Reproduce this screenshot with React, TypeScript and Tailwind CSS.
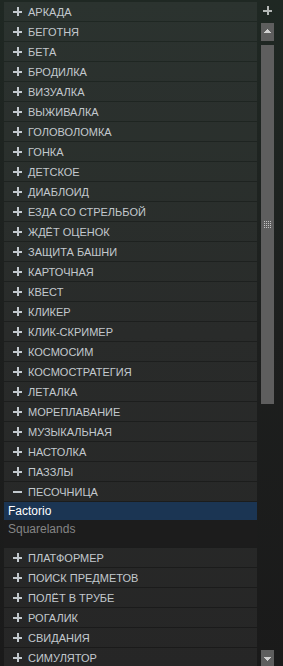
import React from "react";

// Жанры в боковой панели библиотеки
const BEFORE = [
  "АРКАДА",
  "БЕГОТНЯ",
  "БЕТА",
  "БРОДИЛКА",
  "ВИЗУАЛКА",
  "ВЫЖИВАЛКА",
  "ГОЛОВОЛОМКА",
  "ГОНКА",
  "ДЕТСКОЕ",
  "ДИАБЛОИД",
  "ЕЗДА СО СТРЕЛЬБОЙ",
  "ЖДЁТ ОЦЕНОК",
  "ЗАЩИТА БАШНИ",
  "КАРТОЧНАЯ",
  "КВЕСТ",
  "КЛИКЕР",
  "КЛИК-СКРИМЕР",
  "КОСМОСИМ",
  "КОСМОСТРАТЕГИЯ",
  "ЛЕТАЛКА",
  "МОРЕПЛАВАНИЕ",
  "МУЗЫКАЛЬНАЯ",
  "НАСТОЛКА",
  "ПАЗЗЛЫ",
];

const AFTER = [
  "ПЛАТФОРМЕР",
  "ПОИСК ПРЕДМЕТОВ",
  "ПОЛЁТ В ТРУБЕ",
  "РОГАЛИК",
  "СВИДАНИЯ",
  "СИМУЛЯТОР",
];

const GAMES = [
  { name: "Factorio", selected: true },
  { name: "Squarelands", selected: false },
];

function Plus({ color = "bg-[#c3c9ce]" }: { color?: string }) {
  return (
    <span className="relative block w-[9px] h-[9px] shrink-0">
      <span className={`absolute left-0 top-[3.5px] w-[9px] h-[2px] ${color}`} />
      <span className={`absolute top-0 left-[3.5px] w-[2px] h-[9px] ${color}`} />
    </span>
  );
}

function Minus() {
  return (
    <span className="relative block w-[9px] h-[9px] shrink-0">
      <span className="absolute left-0 top-[3.5px] w-[9px] h-[2px] bg-[#c3c9ce]" />
    </span>
  );
}

function CategoryRow({ label, open }: { label: string; open?: boolean }) {
  return (
    <div className="h-[19px] shrink-0 flex items-center gap-[6px] pl-[9px] bg-white/[0.055] text-[11px] leading-none text-[#c3c9ce]">
      {open ? <Minus /> : <Plus />}
      <span className="pt-px">{label}</span>
    </div>
  );
}

function Grip() {
  return (
    <div className="grid grid-cols-4 gap-px">
      {Array.from({ length: 16 }).map((_, i) => (
        <span key={i} className="block w-px h-px bg-[#c4c4c4]" />
      ))}
    </div>
  );
}

export default function App() {
  return (
    <div
      className="w-[283px] h-[666px] overflow-hidden flex bg-gradient-to-b from-[#1f2823] via-[#1d1f1e] to-[#1a1a1a]"
      style={{ fontFamily: '"Liberation Sans", Arial, "Noto Sans CJK SC", sans-serif' }}
    >
      <div className="w-[257px] shrink-0 pl-1 pt-[2px] flex flex-col gap-px">
        {BEFORE.map((g) => (
          <CategoryRow key={g} label={g} />
        ))}
        <CategoryRow label="ПЕСОЧНИЦА" open />
        <div className="h-[45px] shrink-0 flex flex-col bg-[#1c1c1c]">
          {GAMES.map((g) => (
            <div
              key={g.name}
              className={`h-[18px] flex items-center pl-1 text-[12px] leading-none ${
                g.selected ? "bg-[#1b3553] text-white" : "text-[#858585]"
              }`}
            >
              {g.name}
            </div>
          ))}
        </div>
        {AFTER.map((g) => (
          <CategoryRow key={g} label={g} />
        ))}
      </div>

      <div className="flex-1 flex flex-col pt-[6px]">
        <div className="ml-[6px]">
          <Plus color="bg-[#b4b8b6]" />
        </div>
        <div className="mt-[8px] ml-1 w-[13px] h-[18px] bg-[#5e5e5e] flex justify-center pt-[6px]">
          <svg width="7" height="4" viewBox="0 0 7 4" shapeRendering="crispEdges">
            <path d="M3 0h1v1h1v1h1v1h1v1H0V3h1V2h1V1h1z" fill="#d0d0d0" />
          </svg>
        </div>
        <div className="mt-[4px] ml-1 w-[13px] h-[359px] bg-[#5e5e5e] flex items-center justify-center">
          <Grip />
        </div>
        <div className="mt-auto ml-1 w-[13px] h-[16px] bg-[#5e5e5e] flex justify-center pt-[7px]">
          <svg width="7" height="4" viewBox="0 0 7 4" shapeRendering="crispEdges">
            <path d="M0 0h7v1H6v1H5v1H4v1H3V3H2V2H1V1H0z" fill="#d0d0d0" />
          </svg>
        </div>
      </div>
    </div>
  );
}
